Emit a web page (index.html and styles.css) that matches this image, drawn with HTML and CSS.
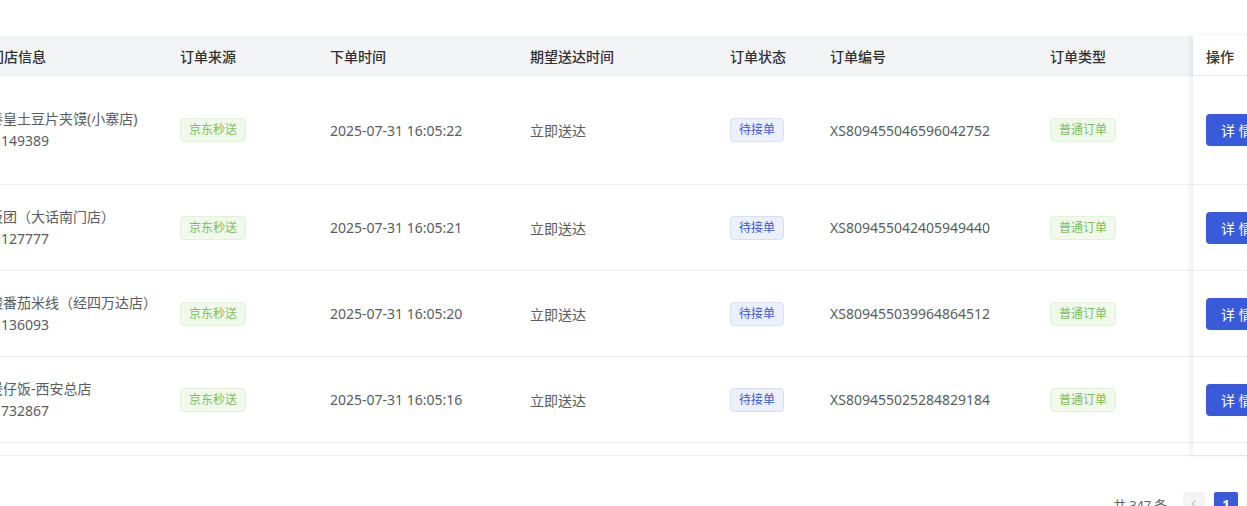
FILE: index.html
```html
<!DOCTYPE html>
<html lang="zh-CN">
<head>
<meta charset="utf-8">
<title>订单列表</title>
<link rel="stylesheet" href="styles.css">
</head>
<body>
<div class="page">
  <div class="table">
    <div class="main">
      <div class="inner">
        <div class="row head">
          <div class="cell first">门店信息</div>
          <div class="cell">订单来源</div>
          <div class="cell">下单时间</div>
          <div class="cell">期望送达时间</div>
          <div class="cell">订单状态</div>
          <div class="cell">订单编号</div>
          <div class="cell">订单类型</div>
        </div>
        <div class="row tall">
          <div class="cell shop"><span class="sname">秦皇土豆片夹馍(小寨店)</span><span class="sid">149389</span></div>
          <div class="cell"><span class="tag green">京东秒送</span></div>
          <div class="cell">2025-07-31 16:05:22</div>
          <div class="cell">立即送达</div>
          <div class="cell"><span class="tag blue">待接单</span></div>
          <div class="cell">XS809455046596042752</div>
          <div class="cell"><span class="tag green">普通订单</span></div>
        </div>
        <div class="row">
          <div class="cell shop"><span class="sname">饭团（大话南门店）</span><span class="sid">127777</span></div>
          <div class="cell"><span class="tag green">京东秒送</span></div>
          <div class="cell">2025-07-31 16:05:21</div>
          <div class="cell">立即送达</div>
          <div class="cell"><span class="tag blue">待接单</span></div>
          <div class="cell">XS809455042405949440</div>
          <div class="cell"><span class="tag green">普通订单</span></div>
        </div>
        <div class="row">
          <div class="cell shop"><span class="sname">酸番茄米线（经四万达店）</span><span class="sid">136093</span></div>
          <div class="cell"><span class="tag green">京东秒送</span></div>
          <div class="cell">2025-07-31 16:05:20</div>
          <div class="cell">立即送达</div>
          <div class="cell"><span class="tag blue">待接单</span></div>
          <div class="cell">XS809455039964864512</div>
          <div class="cell"><span class="tag green">普通订单</span></div>
        </div>
        <div class="row">
          <div class="cell shop"><span class="sname">煲仔饭-西安总店</span><span class="sid">732867</span></div>
          <div class="cell"><span class="tag green">京东秒送</span></div>
          <div class="cell">2025-07-31 16:05:16</div>
          <div class="cell">立即送达</div>
          <div class="cell"><span class="tag blue">待接单</span></div>
          <div class="cell">XS809455025284829184</div>
          <div class="cell"><span class="tag green">普通订单</span></div>
        </div>
        <div class="scrollbar-space"></div>
      </div>
    </div>
    <div class="fixed">
      <div class="frow head"><div class="cell">操作</div></div>
      <div class="frow tall"><div class="cell"><button class="btn">详 情</button></div></div>
      <div class="frow"><div class="cell"><button class="btn">详 情</button></div></div>
      <div class="frow"><div class="cell"><button class="btn">详 情</button></div></div>
      <div class="frow"><div class="cell"><button class="btn">详 情</button></div></div>
      <div class="scrollbar-space"></div>
    </div>
  </div>
  <div class="pager">
    <span class="total">共 347 条</span>
    <span class="pbtn prev"><svg width="10" height="10" viewBox="0 0 10 10"><path d="M6.5 1.5 L3 5 L6.5 8.5" fill="none" stroke="#c0c4cc" stroke-width="1.2"/></svg></span>
    <span class="pbtn active">1</span>
    <span class="pbtn">2</span>
    <span class="pbtn">3</span>
  </div>
</div>
</body>
</html>
```

FILE: styles.css
```css
html, body {
  margin: 0;
  padding: 0;
  background: #fff;
  overflow: hidden;
}
body {
  font-family: "Noto Sans", "Noto Sans CJK SC", sans-serif;
  font-size: 14px;
  color: #5a5c61;
}
.page {
  width: 1313px;
  padding-top: 36px;
}
.table {
  display: flex;
  border-bottom: 1px solid #ebeef5;
}
.main {
  width: 1193px;
  overflow: hidden;
}
.inner {
  margin-left: -21px;
}
.row {
  display: grid;
  grid-template-columns: 191px 150px 200px 200px 100px 220px 180px;
  height: 85px;
  border-bottom: 1px solid #ebeef5;
}
.row.head, .frow.head {
  height: 39px;
  color: #303133;
  font-weight: 500;
}
.row.head {
  background: #f3f4f6;
}
.row.head .first {
  padding-left: 11px;
}
.row.tall, .frow.tall {
  height: 108px;
}
.cell {
  display: flex;
  align-items: center;
  padding: 0 10px;
  white-space: nowrap;
}
.shop {
  flex-direction: column;
  align-items: flex-start;
  justify-content: center;
  line-height: 22px;
}
.sid {
  padding-left: 12px;
}
.scrollbar-space {
  height: 12px;
}
.tag {
  display: inline-block;
  height: 22px;
  line-height: 22px;
  padding: 0 8px;
  font-size: 12px;
  border-radius: 4px;
  border: 1px solid;
}
.tag.green {
  color: #7cbf5b;
  background: #f0f9eb;
  border-color: #e1f3d8;
}
.tag.blue {
  color: #3a5bd6;
  background: #ecf0fd;
  border-color: #d6ddf8;
}
.fixed {
  width: 120px;
  background: #fff;
  box-shadow: -3px 0 6px rgba(0, 0, 0, 0.07);
  position: relative;
  z-index: 1;
}
.frow {
  height: 85px;
  border-bottom: 1px solid #ebeef5;
  display: flex;
}
.frow .cell {
  padding: 0 13px;
}
.btn {
  font-family: inherit;
  font-size: 14px;
  color: #fff;
  background: #3a5bd9;
  border: none;
  border-radius: 4px;
  height: 32px;
  padding: 0 15px;
  cursor: pointer;
}
.pager {
  display: flex;
  align-items: center;
  justify-content: flex-end;
  margin-top: 36px;
  padding-right: 7px;
  height: 24px;
  font-size: 13px;
}
.total {
  margin-right: 12px;
  color: #606266;
  letter-spacing: -0.2px;
}
.pbtn {
  display: inline-flex;
  align-items: center;
  justify-content: center;
  min-width: 24px;
  height: 24px;
  margin: 0 4px;
  background: #f4f4f5;
  border-radius: 2px;
  color: #606266;
  font-weight: 700;
  font-size: 13px;
}
.pbtn.prev {
  min-width: 22px;
  margin-right: 5px;
}
.pbtn.active {
  background: #3a5bd9;
  color: #fff;
}
```
